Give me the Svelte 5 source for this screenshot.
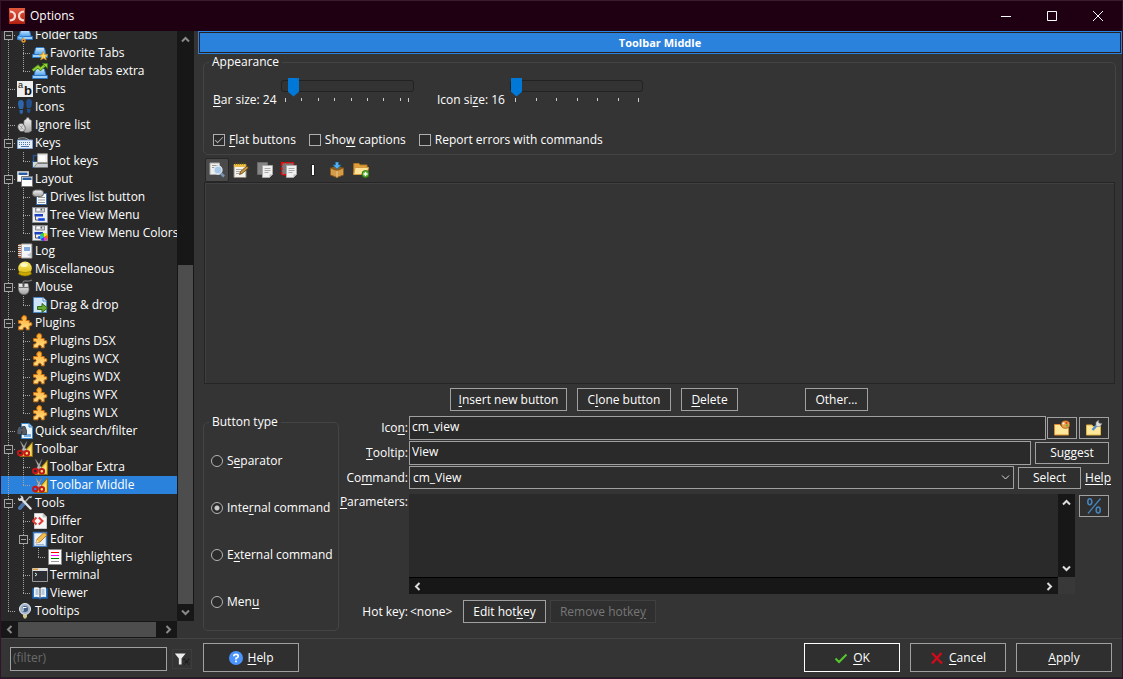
<script>
  const tree = [
    { g: 't', box: true, icon: 'tabs', label: 'Folder tabs' },
    { g: '|t', icon: 'favtabs', label: 'Favorite Tabs' },
    { g: '|l', icon: 'tabsextra', label: 'Folder tabs extra' },
    { g: 't', icon: 'fonts', label: 'Fonts' },
    { g: 't', icon: 'feet', label: 'Icons' },
    { g: 't', icon: 'ignore', label: 'Ignore list' },
    { g: 't', box: true, icon: 'keys', label: 'Keys' },
    { g: '|l', icon: 'hotkeys', label: 'Hot keys' },
    { g: 't', box: true, icon: 'layout', label: 'Layout' },
    { g: '|t', icon: 'drives', label: 'Drives list button' },
    { g: '|t', icon: 'treeview', label: 'Tree View Menu' },
    { g: '|l', icon: 'treecolors', label: 'Tree View Menu Colors' },
    { g: 't', icon: 'log', label: 'Log' },
    { g: 't', icon: 'misc', label: 'Miscellaneous' },
    { g: 't', box: true, icon: 'mouse', label: 'Mouse' },
    { g: '|l', icon: 'drag', label: 'Drag & drop' },
    { g: 't', box: true, icon: 'plugin', label: 'Plugins' },
    { g: '|t', icon: 'plugin', label: 'Plugins DSX' },
    { g: '|t', icon: 'plugin', label: 'Plugins WCX' },
    { g: '|t', icon: 'plugin', label: 'Plugins WDX' },
    { g: '|t', icon: 'plugin', label: 'Plugins WFX' },
    { g: '|l', icon: 'plugin', label: 'Plugins WLX' },
    { g: 't', icon: 'search', label: 'Quick search/filter' },
    { g: 't', box: true, icon: 'toolbar', label: 'Toolbar' },
    { g: '|t', icon: 'toolbar', label: 'Toolbar Extra' },
    { g: '|l', icon: 'toolbar', label: 'Toolbar Middle' },
    { g: 't', box: true, icon: 'tools', label: 'Tools' },
    { g: '|t', icon: 'differ', label: 'Differ' },
    { g: '|t', box: true, icon: 'editor', label: 'Editor' },
    { g: '||l', icon: 'highlight', label: 'Highlighters' },
    { g: '|t', icon: 'terminal', label: 'Terminal' },
    { g: '|l', icon: 'viewer', label: 'Viewer' },
    { g: 'l', icon: 'bulb', label: 'Tooltips' }
  ];
  const guideClass = { '|': 'pipe', t: 'tee', l: 'elbow' };
  const puzzle = '<path d="M1.500 5.500h4q-1.300-1.800-.5-3.500Q5.700.6 7.300.6T9.500 2q.7 1.700-.5 3.500h3.200v2.200q2.800-1 2.800 1.300T12.200 11v3.800H9.400q.3-2.600-1.700-2.600t-1.700 2.600H1.700v-3.500q2.500 0 2.500-1.700T1.500 8.200Z" fill="url(#orange)" stroke="#c96f12"/>';
  const scissors = '<path d="M15.500 1v14.500H3Z" fill="#e8c43a" stroke="#8d6d10"/><path d="M14 5v9H7Z" fill="#f7e27a"/><path d="M3.500 .5 9.500 9l-2 1.500Z" fill="#e6e6e6" stroke="#777" stroke-width=".6"/><path d="M9.800 .5 4.500 9.500l2 1Z" fill="#c9c9c9" stroke="#777" stroke-width=".6"/><circle cx="3.300" cy="12" r="2.300" fill="none" stroke="#c5161a" stroke-width="2"/><circle cx="9.800" cy="12.300" r="2.300" fill="none" stroke="#c5161a" stroke-width="2"/>';
  const tab = '<path d="M.5 9.500h15v3H.5Z" fill="#9fd0fa" stroke="#2c77c4"/><path d="M2 9.500 3.500 3.500q.4-1 1.500-1h6q1.100 0 1.500 1L14 9.500Z" fill="url(#blue)" stroke="#2c77c4"/>';
  const treeMenu = '<path d="M.5.5h15v15H.5Z" fill="#eceef2" stroke="#8b8f96"/><path d="M3.500 1h9v4h-9Z" fill="#cfd3d9" stroke="#8b8f96"/><path d="M5 1.500h5v2H5Z" fill="#fff"/><path d="M8.500 1.500H10v2H8.500Z" fill="#555"/><path d="M2.500 7h8.500v2.500H2.500Z" fill="#1c3fc4"/><path d="M3.500 9v4H7" fill="none" stroke="#555"/><path d="M6.500 11.500h6v2h-6Z" fill="#1c3fc4" stroke="#3a64e8"/>';
  const icons = {
    tabs: tab + '<circle cx="3.500" cy="10.500" r="2" fill="none" stroke="#4fa0ee" stroke-width="2" stroke-dasharray="1.500 .6"/><circle cx="6.500" cy="13.500" r="1.500" fill="none" stroke="#ef9a2a" stroke-width="1.500"/>',
    favtabs: tab + '<path d="m11.500 6.500 1.300 3 3 .3-2.300 2 .8 3.200-2.800-1.700L8.700 15l.8-3.200-2.300-2 3-.3Z" fill="#ffd65c" stroke="#c98a1c" stroke-width=".7"/>',
    tabsextra: '<g transform="translate(0 3)">' + tab + '</g><path d="M.8 7.500 6 3.500 8.500 6l4-3.500" fill="none" stroke="#3f7d12" stroke-width="3.400"/><path d="M.8 7.500 6 3.500 8.500 6l4-3.500" fill="none" stroke="#97cf36" stroke-width="1.800"/><path d="M10.500.5h5v5Z" fill="#97cf36" stroke="#3f7d12" stroke-width=".8"/>',
    fonts: '<path d="M0 0h16v16H0Z" fill="#eee"/><text x="1" y="7" font-size="9" font-family="Liberation Sans" fill="#111">a</text><text x="7" y="14" font-size="13" font-weight="700" font-family="Liberation Sans" fill="#111">b</text>',
    feet: '<path d="M4 1q2.800 0 2.800 4 0 2-.8 5H2.500Q1 8 1 4.500T4 1ZM2.500 11H6v1.500Q6 15 4.200 15t-1.700-4Z" fill="#2e66ab"/><path d="M12 0q-2.800 0-2.800 4 0 2 .8 5h3.500Q15 7 15 3.500T12 0Zm1.500 10H10v1.500q0 2.500 1.800 2.500t1.700-4Z" fill="#22508d"/>',
    ignore: '<path d="M7 3.500 9.500 2V.8H12V2l2.500 1.500V14l-3 1.500H8L6.500 14Z" fill="url(#gray)" stroke="#777" stroke-width=".6"/><ellipse cx="4.500" cy="10.500" rx="3.500" ry="4.300" fill="#d7d7d7" stroke="#555" stroke-width=".7" transform="rotate(-20 4.500 10.500)"/><path d="M2.500 8.500l4 4M3.500 12.500l2-4" stroke="#888" stroke-width=".7"/>',
    keys: '<path d="M.5 5h15v8.500H.5Z" fill="#e6effa" stroke="#7fa3d3"/><path d="M1 3.500Q8 1.500 12 5" fill="none" stroke="#aaa"/><path d="M2 7.500h12M2 9.500h12" stroke="#4b75ad" stroke-dasharray="1 1"/><path d="M4 11.500h8" stroke="#4b75ad"/>',
    hotkeys: '<path d="M6 2.500H1.500V12" fill="none" stroke="#29548f" stroke-width="1.500"/><path d="M.5 8.500h6v6h-6Z" fill="#d6d6cf" stroke="#29548f"/><path d="M5.500.8h10v8.700h-10Z" fill="#f2f2ee" stroke="#9b9b93"/><path d="M5 10.500h11v4H2Z" fill="#c9ccd0" stroke="#777" stroke-width=".7"/><path d="M7.500 3H13v4.500H7.500Z" fill="#fff"/>',
    layout: '<path d="M.5.5h11v10H.5Z" fill="#fff" stroke="#bbb"/><path d="M1.500 1.500h9V4h-9Z" fill="#2b5e9e"/><path d="M4.500 5.500h11v10h-11Z" fill="#fff" stroke="#777"/><path d="M5.500 6.500h9V9h-9Z" fill="#2b5e9e"/>',
    drives: '<path d="M4.500 4.500h10v11h-10Z" fill="#f8fafc" stroke="#356eb0"/><path d="M6 8.500h7m-7 2.500h7m-7 2.500h7" stroke="#999"/><rect x=".5" y="1" width="11" height="6.500" rx="3" fill="url(#gray)" stroke="#666"/>',
    treeview: treeMenu,
    treecolors: treeMenu + '<circle cx="12" cy="12" r="4" fill="#3ecf3a"/><path d="M12 12V8a4 4 0 0 1 3.500 2Z" fill="#ffe32a"/><path d="m12 12 3.500-2a4 4 0 0 1 0 4Z" fill="#ff5c1e"/><path d="m12 12 3.500 2a4 4 0 0 1-3.500 2Z" fill="#f22ec9"/><path d="M12 12v4a4 4 0 0 1-3.500-2Z" fill="#4a35f0"/><path d="m12 12-3.500 2a4 4 0 0 1 0-4Z" fill="#25b8ea"/>',
    log: '<path d="M1.500 1H5v14H1.500Z" fill="#a65a3b"/><path d="M4.500 1h10.300v14H4.500Z" fill="#f3f5f7" stroke="#aaa"/><path d="M1 2.500h3m-3 2h3m-3 2h3m-3 2h3m-3 2h3m-3 2h3" stroke="#ddd"/><path d="M7 4h6v4H7Z" fill="#7fa9dd"/><path d="m10 12 4-2.500V14Z" fill="#c2c8cf"/>',
    misc: '<circle cx="8" cy="7.300" r="6.800" fill="url(#yellow)"/><path d="M2.500 10.500q5.500 2.500 11 0l1 2.500q-6.500 4-13 0Z" fill="#c9a800" stroke="#8d7500" stroke-width=".6"/><ellipse cx="7" cy="4" rx="3.500" ry="2" fill="#fff9c2"/>',
    mouse: '<path d="M6 4Q6 1.500 9 2t6-1" fill="none" stroke="#777" stroke-width="1.300"/><path d="M1.500 4.500H11l1 6q-.5 5-5 5t-5.500-5Z" fill="url(#gray)" stroke="#777" stroke-width=".7"/><path d="M1.500 8.500h10M6.500 4.500v4" stroke="#777"/><path d="M5.500 3.500h2v4h-2Z" fill="#555"/>',
    drag: '<path d="M1.500.5H11l3.500 3.500v11.500h-13Z" fill="#cfe4f8" stroke="#4b88c8"/><path d="M11 .5V4h3.500" fill="#fff" stroke="#4b88c8"/><path d="M5.500 9.500H10v-3l5.500 4.500L10 15.500v-3H5.500Z" fill="#6bab35" stroke="#2e6a10"/>',
    plugin: puzzle,
    search: '<path d="M4.500.5H12L15.500 4v11.500h-11Z" fill="#eaf4fd" stroke="#3d87cf"/><path d="M12 .5V4h3.500" fill="#9cc8ef" stroke="#3d87cf"/><path d="M7 12.500h7" stroke="#7bb3e6" stroke-width="3"/><path d="M1.500 3.500h2.500v2h1.500v-2H8l1.500 4v4H5.500V8.500H4.500v3H0V7.500Z" fill="#555c66" stroke="#23272d" stroke-width=".7"/>',
    toolbar: scissors,
    tools: '<path d="M13 1.500 7 8" stroke="#aaa" stroke-width="1.500"/><path d="M7 8.500 3 13" stroke="#4c76aa" stroke-width="4" stroke-linecap="round"/><path d="m4.500 4 9 9.500" stroke="#e1e1e1" stroke-width="2.500" stroke-linecap="round"/><path d="m1 2.500 2 1.500 1.500-1.500L3 .5Q6.500.5 6.500 4 5 6.500 2.500 6 .5 5 1 2.500Z" fill="#ddd"/><path d="m12.500 2 2.500-1-1 2.500Z" fill="#ddd"/>',
    differ: '<path d="M2.500.5H11L14.500 4v11.500h-12Z" fill="#f7f7f7" stroke="#ccc"/><path d="M11 .5V4h3.500" fill="#bbb" stroke="#ccc"/><path d="M4.500 4.500.8 8l3.700 3.500M6.800 4.500 10.500 8l-3.700 3.500" fill="none" stroke="#e33a35" stroke-width="2"/>',
    editor: '<path d="M1.500 1.500h13v14h-13Z" fill="#e9f1fa" stroke="#3c78bd" stroke-width="1.500"/><path d="M4 13.500h8" stroke="#9db7d3"/><path d="m4 12 1.200-4L12 1.500 15 4 8 11Z" fill="#f4bd4f" stroke="#a86b16" stroke-width=".8"/><path d="m4 12 1-3.300L7.300 11Z" fill="#f6e1b6"/>',
    highlight: '<path d="M1.500.5h13v15h-13Z" fill="#fff" stroke="#888"/><path d="M4 3.500h8" stroke="red"/><path d="M4 6.500h8" stroke="#f0f"/><path d="M4 9.500h8" stroke="green"/><path d="M4 12.500h8" stroke="#999"/>',
    terminal: '<path d="M.5 1.500h15v13H.5Z" fill="#2a2d31" stroke="#999"/><path d="M.5 1h15v3H.5Z" fill="#dcdcdc"/><path d="M1 1.500h5V3H1Z" fill="#e3a53f"/><path d="m3 6 2 1.500L3 9" fill="none" stroke="#eee"/>',
    viewer: '<path d="M.5 3.500h15v10H9l-1 1-1-1H.5Z" fill="#2c6fb5" stroke="#1d5390"/><path d="M2 2.500q3.500-1 6 .7 2.500-1.700 6-.7v9.500q-3.500-.8-6 .7-2.500-1.500-6-.7Z" fill="#eef5fc"/><path d="M8 3v10" stroke="#444"/><path d="M3.500 5h3m-3 2h3m-3 2h3m3-4h3m-3 2h3m-3 2h3" stroke="#7c9cbd"/>',
    bulb: '<circle cx="8" cy="6" r="5.500" fill="#9fb3cc" stroke="#e9eef4"/><circle cx="8" cy="6" r="3" fill="#415a7d"/><path d="M6 8V4.500h3.500" stroke="#fff" fill="none"/><path d="M6 11.500h4v2L9 15.500H7L6 13.500Z" fill="#cfc68a"/>',
    view: '<path d="M1 1h9.500v11.500H1Z" fill="#f0f0ee" stroke="#aaa"/><path d="M3 3.500h6M3 5.500h4" stroke="#999"/><circle cx="9" cy="8" r="4" fill="#a8c8e8" stroke="#dfe8f1" stroke-width="1.300"/><path d="m12 11.500 3 3" stroke="#7895b6" stroke-width="2.500"/>',
    edit: '<path d="M1 2.500h12v13H1Z" fill="#f4f2ea" stroke="#8e877a"/><path d="M1 2h12v3H1Z" fill="#e9bc43"/><path d="M2 1.500h10.500" stroke="#5c4a1a" stroke-dasharray="1 1" stroke-width="2"/><path d="M3 7.500h6m-6 2h4m-4 2h3" stroke="#aaa"/><path d="m6.500 12.500 1-3L14 4l1.500 2-6.500 5.500Z" fill="#c99841" stroke="#5b3b10" stroke-width=".8"/>',
    copy: '<path d="M.5.5h10v12H.5Z" fill="#858585" stroke="#6b6b6b"/><path d="M5.500 3.500h10v9l-3 3h-7Z" fill="#f0f0f0" stroke="#aaa"/><path d="M7.500 6.500h6m-6 2h6m-6 2h4" stroke="#aaa"/><path d="M12.500 15v-2.500h3Z" fill="#bbb"/>',
    move: '<path d="M.8.8h12v12H.8Z" fill="#787878" stroke="red" stroke-width="1.600" stroke-dasharray="3 1.500"/><path d="M5.500 3.500h10v9l-3 3h-7Z" fill="#f0f0f0" stroke="#aaa"/><path d="M7.500 6.500h6m-6 2h6m-6 2h4" stroke="#aaa"/><path d="M12.500 15v-2.500h3Z" fill="#bbb"/>',
    sep: '<path d="M6.500 2.500h3v11h-3Z" fill="#111"/><path d="M7 3h2v10H7Z" fill="#fff"/>',
    pack: '<path d="m1.500 6 6.500 2.500L14.500 6v7L8 15.500 1.500 13Z" fill="#d29c4a" stroke="#8c5c1c"/><path d="M1.500 6 8 3.500 14.500 6 8 8.500Z" fill="#8a5d21"/><path d="M8 8.500v7" stroke="#f0c987"/><path d="M6.500 0h3v3H12L8 7 4 3h2.500Z" fill="#55b0ee" stroke="#1f6da8" stroke-width=".7"/>',
    newfolder: '<path d="M.8 1.500H6l1 1.500h7v9.500H.8Z" fill="#dd9f3c" stroke="#b97a1f"/><path d="M2 5.500h13.500l-1.500 7H.8Z" fill="#ffe29a" stroke="#d49a3c"/><circle cx="12.500" cy="12" r="3.500" fill="#5cb531" stroke="#2e7a12"/><path d="M10.500 12h4m-2-2v4" stroke="#fff" stroke-width="1.300"/>',
    palette: '<path d="M.5 4.500H6l1 1.500h7.500v9H.5Z" fill="#ffe79c" stroke="#dc8d2b"/><ellipse cx="11.500" cy="4.500" rx="4.300" ry="3.800" fill="#e8a14b" stroke="#985213" stroke-width=".8"/><circle cx="9.500" cy="3.500" r="1" fill="#fff"/><circle cx="12.500" cy="3" r="1" fill="#d83b22"/><circle cx="13" cy="5.500" r="1" fill="#5bad30"/>',
    wrench: '<path d="M.5 5H6l1 1.500h7.500v8.500H.5Z" fill="#ffe79c" stroke="#e0b244"/><path d="m6.500 10 5-5.500" stroke="#4e8ed3" stroke-width="2.500"/><path d="M10 5.500V2.500L12.500 0v2.500L14 3.500h2L14 6.500h-3Z" fill="#ddd" stroke="#888" stroke-width=".6"/>'
  };

  let filter = $state('');
  let selected = $state('Toolbar Middle');
  let bar = $state(5);
  let iconSize = $state(0);
  let kind = $state('internal');
  const toolbar = [
    ['view', 'View'], ['edit', 'Edit'], ['copy', 'Copy'], ['move', 'Move'],
    ['sep', 'Separator'], ['pack', 'Pack'], ['newfolder', 'New folder']
  ];
</script>

{#snippet icon(name)}
  <svg class="icon" viewBox="0 0 16 16" aria-hidden="true">{@html icons[name]}</svg>
{/snippet}

{#snippet chevron(dir)}
  <svg class="chev {dir}" viewBox="0 0 9 9" aria-hidden="true"><path d="M1 6.500 4.500 3 8 6.500" /></svg>
{/snippet}

<svg class="defs" aria-hidden="true">
  <defs>
    <linearGradient id="blue" x2="0" y2="1"><stop stop-color="#d6eeff" /><stop offset="1" stop-color="#4d9fee" /></linearGradient>
    <linearGradient id="orange" x2="0" y2="1"><stop stop-color="#ffa928" /><stop offset="1" stop-color="#ffe08a" /></linearGradient>
    <linearGradient id="gray" x2="0" y2="1"><stop stop-color="#f3f3f3" /><stop offset="1" stop-color="#a2a2a2" /></linearGradient>
    <linearGradient id="yellow" x2="0" y2="1"><stop stop-color="#fff27a" /><stop offset="1" stop-color="#d8b400" /></linearGradient>
    <linearGradient id="red" x2="0" y2="1"><stop stop-color="#e2583e" /><stop offset="1" stop-color="#b02010" /></linearGradient>
  </defs>
</svg>

<div class="window">
  <header class="titlebar">
    <svg class="logo" viewBox="0 0 16 16" aria-hidden="true">
      <path d="M0 0h16v16H0Z" fill="url(#red)" />
      <path d="M1 3.500Q6 4 6 8t-5 4.500M15 3.500Q10 4 10 8t5 4.500" fill="none" stroke="#f4dcd4" stroke-width="2.200" />
    </svg>
    <h1>Options</h1>
    <button class="sys" aria-label="Minimize"><svg viewBox="0 0 10 10"><path d="M0 5.500h10" /></svg></button>
    <button class="sys" aria-label="Maximize"><svg viewBox="0 0 10 10"><path d="M.5.5h9v9h-9Z" /></svg></button>
    <button class="sys" aria-label="Close"><svg viewBox="0 0 10 10"><path d="m0 0 10 10M10 0 0 10" /></svg></button>
  </header>

  <div class="body">
    <nav class="side">
      <div class="treearea">
        <ul class="tree">
          {#each tree as row}
            <li class:selected={row.label === selected}>
              {#each row.g.split('') as ch, i}
                <span class="guide {guideClass[ch]}">
                  {#if row.box && i === row.g.length - 1}<span class="box"></span>{/if}
                </span>
              {/each}
              {@render icon(row.icon)}
              <button class="node" onclick={() => (selected = row.label)}>{row.label}</button>
            </li>
          {/each}
        </ul>
        <div class="vbar dim">{@render chevron('up')}<div class="vtrack"><div class="vthumb"></div></div>{@render chevron('down')}</div>
      </div>
      <div class="hrow">
        <div class="hbar dim">{@render chevron('left')}<div class="htrack"><div class="hthumb"></div></div>{@render chevron('right')}</div>
      </div>
    </nav>

    <main>
      <h2>Toolbar Middle</h2>
      <fieldset class="appearance">
        <legend>Appearance</legend>
        <div class="sliders">
          <label for="bar"><u>B</u>ar size: 24</label>
          <div class="slider">
            <input id="bar" type="range" bind:value={bar} />
            <svg class="ticks" viewBox="0 0 133 8" aria-hidden="true"><path d="M4.500 2v4M20.500 2v3M37.500 2v3M53.500 2v3M70.500 2v3M86.500 2v3M102.500 2v3M119.500 2v3M127.500 2v4" /></svg>
          </div>
          <label for="isize">Icon si<u>z</u>e: 16</label>
          <div class="slider">
            <input id="isize" type="range" bind:value={iconSize} />
            <svg class="ticks" viewBox="0 0 133 8" aria-hidden="true"><path d="M5.500 2v4M26.500 2v3M46.500 2v3M67.500 2v3M87.500 2v3M108.500 2v3M128.500 2v4" /></svg>
          </div>
        </div>
        <div class="checks">
          <label><input type="checkbox" checked /><span><u>F</u>lat buttons</span></label>
          <label><input type="checkbox" /><span>Sho<u>w</u> captions</span></label>
          <label><input type="checkbox" /><span>Report errors with commands</span></label>
        </div>
      </fieldset>

      <div class="toolbar">
        {#each toolbar as [name, title], i}
          <button class:on={i === 0} aria-label={title}>{@render icon(name)}</button>
        {/each}
      </div>
      <div class="canvas"></div>

      <div class="actions">
        <button class="btn insert"><span><u>I</u>nsert new button</span></button>
        <button class="btn clone"><span>C<u>l</u>one button</span></button>
        <button class="btn delete"><span><u>D</u>elete</span></button>
        <button class="btn other">Other...</button>
      </div>

      <div class="details">
        <fieldset class="types">
          <legend>Button type</legend>
          <label><input type="radio" value="separator" bind:group={kind} /><span>S<u>e</u>parator</span></label>
          <label><input type="radio" value="internal" bind:group={kind} /><span>Inte<u>r</u>nal command</span></label>
          <label><input type="radio" value="external" bind:group={kind} /><span>E<u>x</u>ternal command</span></label>
          <label><input type="radio" value="menu" bind:group={kind} /><span>Men<u>u</u></span></label>
        </fieldset>

        <div class="form">
          <div class="field">
            <label for="icon">Ico<u>n</u>:</label>
            <input id="icon" class="text" value="cm_view" />
            <button class="btn small first" aria-label="Choose icon">{@render icon('palette')}</button>
            <button class="btn small" aria-label="Icon options">{@render icon('wrench')}</button>
          </div>
          <div class="field four">
            <label for="tooltip"><u>T</u>ooltip:</label>
            <input id="tooltip" class="text" value="View" />
            <button class="btn suggest">Suggest</button>
          </div>
          <div class="field four cmd">
            <label for="command">Co<u>m</u>mand:</label>
            <div class="combo">
              <select id="command"><option>cm_View</option></select>
              {@render chevron('down')}
            </div>
            <button class="btn select">Select</button>
            <a href="#help">Help</a>
          </div>
          <div class="field four params">
            <label for="params"><u>P</u>arameters:</label>
            <div class="memo">
              <textarea id="params"></textarea>
              <div class="vbar">{@render chevron('up')}<div class="vtrack"></div>{@render chevron('down')}</div>
              <div class="hbar">{@render chevron('left')}<div class="htrack"></div>{@render chevron('right')}</div>
            </div>
            <button class="btn small percent" aria-label="Insert variable">
              <svg viewBox="0 0 16 18" aria-hidden="true"><path d="M2 16.500 14.500 1.500" stroke-width="1.300" /><ellipse cx="3.800" cy="4.800" rx="2" ry="3" /><ellipse cx="12.200" cy="13" rx="2" ry="3" /></svg>
            </button>
          </div>
          <div class="hotkey">
            <span class="cap">Hot key:</span>
            <span class="none">&lt;none&gt;</span>
            <button class="btn edit"><span>Edit hot<u>k</u>ey</span></button>
            <button class="btn remove" disabled><span>Remove hotke<u>y</u></span></button>
          </div>
        </div>
      </div>
    </main>
  </div>

  <footer>
    <div class="filter">
      <input class="text" placeholder="(filter)" aria-label="Filter" bind:value={filter} />
      <button aria-label="Clear filter">
        <svg viewBox="0 0 20 20" aria-hidden="true"><path d="M2 4h12L9.500 9.500V16h-3V9.500Z" fill="#eee" /><path d="m12 10 6 6m0-6-6 6" stroke="#1c1c1c" stroke-width="2" stroke-dasharray="1.500 1" /></svg>
      </button>
    </div>
    <div class="buttons">
      <button class="btn big">
        <svg viewBox="0 0 14 14" aria-hidden="true"><circle cx="7" cy="7" r="7" fill="#4a94ff" /><path d="M4.800 5.300Q4.800 3.300 7 3.300t2.200 1.900Q9.200 6.500 7 7.300v1.200M7 9.500v1.700" fill="none" stroke="#fff" stroke-width="1.700" /></svg>
        <span><u>H</u>elp</span>
      </button>
      <span class="spring"></span>
      <button class="btn big ok">
        <svg viewBox="0 0 14 14" aria-hidden="true"><path d="m1.500 7.500 3.500 3.500 7.500-7.500" fill="none" stroke="#55c92c" stroke-width="2" /></svg>
        <span><u>O</u>K</span>
      </button>
      <button class="btn big">
        <svg viewBox="0 0 14 14" aria-hidden="true"><path d="m2 2 10 10.500M11.500 2 2 12.500" fill="none" stroke="#d60a18" stroke-width="2.200" /></svg>
        <span><u>C</u>ancel</span>
      </button>
      <button class="btn big"><span><u>A</u>pply</span></button>
    </div>
  </footer>
</div>

<style>
  :global(body) { margin: 0; background: #343434; }
  .window, .window *, .window *::before { box-sizing: border-box; }
  .window {
    min-height: 100vh;
    display: flex;
    flex-direction: column;
    background: #343434;
    color: #fff;
    font: 12px/16px "Open Sans", "Noto Sans", sans-serif;
    border: 1px solid #30142a;
    border-top-color: #3a1c30;
  }
  .defs { position: absolute; width: 0; height: 0; }
  button, input, select, textarea { font: inherit; color: inherit; margin: 0; border-radius: 0; }
  button { padding: 0; border: 0; background: none; }
  u { text-decoration: underline; text-underline-offset: 2px; }
  h1, h2 { margin: 0; font-size: inherit; font-weight: 400; }
  .icon { width: 16px; height: 16px; flex: none; display: block; }

  .titlebar { height: 30px; background: #1f0012; display: flex; align-items: center; padding: 0 1px 0 8px; flex: none; }
  .logo { width: 16px; height: 16px; margin-right: 5px; }
  .titlebar h1 { flex: 1; }
  .sys { width: 46px; height: 30px; display: grid; place-items: center; }
  .sys svg { width: 10px; height: 10px; fill: none; stroke: #fff; }

  .body { flex: 1; display: grid; grid-template-columns: 193px 1fr; }
  .side { display: flex; flex-direction: column; background: #292929; }
  .treearea { flex: 1; display: flex; }
  .tree { flex: 1; min-width: 0; list-style: none; margin: 0; padding: 0; overflow: hidden; }
  .tree li { height: 18px; display: flex; align-items: center; padding-left: 1px; white-space: nowrap; }
  .tree li:first-child { margin-top: -5px; }
  .tree li.selected { background: #2b82dc; }
  .node { margin-left: 2px; line-height: 18px; }
  .guide { width: 15px; height: 18px; flex: none; position: relative; background-repeat: no-repeat; --v: repeating-linear-gradient(to bottom, #a4a4a4 0 1px, transparent 1px 2px); --h: repeating-linear-gradient(to right, #a4a4a4 0 1px, transparent 1px 2px); }
  .pipe { background-image: var(--v); background-size: 1px 18px; background-position: 6px 0; }
  .tee { background-image: var(--v), var(--h); background-size: 1px 18px, 8px 1px; background-position: 6px 0, 6px 9px; }
  .elbow { background-image: var(--v), var(--h); background-size: 1px 10px, 8px 1px; background-position: 6px 0, 6px 9px; }
  .box { position: absolute; left: 2px; top: 5px; width: 9px; height: 9px; border: 1px solid #a4a4a4; background: linear-gradient(#a4a4a4, #a4a4a4) center / 5px 1px no-repeat #292929; }

  .chev { width: 9px; height: 9px; flex: none; fill: none; stroke: #ddd; stroke-width: 2; }
  .dim .chev { stroke: #8a8a8a; }
  .chev.down { transform: rotate(180deg); }
  .chev.left { transform: rotate(-90deg); }
  .chev.right { transform: rotate(90deg); }
  .vbar { width: 17px; flex: none; background: #171717; display: flex; flex-direction: column; align-items: center; padding: 4px 0; gap: 4px; }
  .vtrack { flex: 1; width: 15px; display: flex; flex-direction: column; justify-content: flex-end; }
  .vthumb { height: 61%; background: #4d4d4d; }
  .hbar { height: 17px; background: #171717; display: flex; align-items: center; padding: 0 4px; gap: 4px; }
  .htrack { flex: 1; height: 15px; }
  .hthumb { width: 97%; height: 15px; background: #4d4d4d; }
  .hrow { display: flex; padding-right: 17px; background: #343434; }
  .hrow .hbar { flex: 1; }

  main { display: flex; flex-direction: column; padding-left: 4px; min-width: 0; }
  h2 { height: 23px; line-height: 17px; border: 1px solid #2b82dc; outline: 1px solid #29211f; outline-offset: -2px; background: #2b82dc; text-align: center; padding-top: 2px; font-weight: 700; font-size: 11px; }
  fieldset { min-width: 0; margin: 0; border: 1px solid #444; border-radius: 5px; padding: 0; }
  legend { margin-left: -4px; padding: 0 3px; height: 16px; }
  .appearance { margin: 0 6px 0 5px; height: 101px; padding: 0 9px; }
  .sliders { display: flex; align-items: flex-start; height: 62px; padding-top: 6px; }
  .sliders label { padding-top: 16px; width: 68px; white-space: nowrap; }
  .sliders label + .slider + label { margin-left: 23px; width: 73px; }
  .slider { width: 133px; }
  .slider input { appearance: none; display: block; width: 133px; height: 19px; background: none; }
  .slider input::-webkit-slider-runnable-track { height: 12px; border: 1px solid #222; border-radius: 3px; background: #333; }
  .slider input::-webkit-slider-thumb { appearance: none; width: 11px; height: 19px; margin-top: -3px; background: #0078d7; clip-path: polygon(0 0, 100% 0, 100% 75%, 50% 100%, 0 75%); }
  .ticks { display: block; width: 133px; height: 8px; margin-top: 1px; stroke: #ccc; }
  .checks { display: flex; gap: 13px; }
  .checks label, .types label { display: flex; align-items: center; gap: 4px; white-space: nowrap; }
  input[type="checkbox"] { appearance: none; width: 12px; height: 12px; border: 1px solid #aeaeae; background: #2b2b2b; }
  input[type="checkbox"]:checked::before { content: ""; display: block; width: 8px; height: 4px; margin: 2px 0 0 1px; border: solid #aaa; border-width: 0 0 1px 1px; transform: rotate(-45deg); }

  .toolbar { display: flex; padding: 3px 0 0 7px; }
  .toolbar button { width: 24px; height: 24px; display: grid; place-items: center; }
  .toolbar .on { background: #4a4a4a; border: 1px solid #262626; border-radius: 2px; }
  .canvas { flex: 1; min-height: 120px; margin: 0 7px 0 6px; border: 1px solid #252525; box-shadow: inset 1px 1px #404040; }

  .btn { height: 23px; border: 1px solid #a0a0a0; background: #2f2f2f; display: flex; align-items: center; justify-content: center; flex: none; white-space: nowrap; }
  .actions { display: flex; justify-content: center; gap: 10px; padding: 4px 2px 4px 0; }
  .insert { width: 117px; }
  .clone { width: 94px; }
  .delete { width: 57px; }
  .other { width: 63px; margin-left: 57px; }

  .details { display: flex; margin: 0 0 7px 5px; }
  .types { width: 136px; height: 217px; margin-top: -1px; padding-left: 7px; display: flex; flex-direction: column; }
  .types legend { margin-left: -2px; }
  .types label { height: 47px; padding-top: 15px; }
  input[type="radio"] { appearance: none; width: 12px; height: 12px; border: 1px solid #b4b4b4; border-radius: 50%; background: #2b2b2b; }
  input[type="radio"]:checked { background: radial-gradient(#ccc 0 2px, #2b2b2b 3px); }
  .form { flex: 1; min-width: 0; padding-right: 13px; }
  .field { display: flex; align-items: center; height: 25px; }
  .field > label, .cap { width: 69px; margin-right: 1px; text-align: right; flex: none; }
  .text { height: 24px; border: 1px solid #a0a0a0; background: #2a2a2a; padding: 0 2px 2px; min-width: 0; outline: 0; }
  .field .text { flex: 1; }
  .small { width: 30px; height: 22px; margin-left: 2px; }
  .small.first { margin-left: 1px; }
  .four .btn { margin-left: 4px; height: 22px; }
  .suggest { width: 74px; }
  .select { width: 63px; }
  .cmd { margin-right: -2px; }
  .field a { color: #fff; margin-left: 4px; text-underline-offset: 2px; }
  .combo { flex: 1; min-width: 0; display: grid; align-items: center; }
  .combo select { grid-area: 1 / 1; appearance: none; width: 100%; height: 23px; border: 1px solid #a0a0a0; background: #2d2d2d; padding: 0 3px; outline: 0; }
  .combo .chev { grid-area: 1 / 1; justify-self: end; margin-right: 4px; pointer-events: none; stroke-width: 1; }
  .params { height: auto; align-items: flex-start; padding-top: 4px; }
  .memo { flex: 1; display: grid; grid-template: 83px 17px / 1fr 17px; min-width: 0; background: #383838; }
  textarea { border: 0; background: #2a2a2a; resize: none; outline: 0; width: 100%; height: 100%; display: block; }
  .memo .hbar { border-top: 1px solid #000; }
  .percent { margin-top: 1px; }
  .percent svg { width: 16px; height: 18px; fill: none; stroke: #4584bd; stroke-width: 1.600; }
  .hotkey { display: flex; align-items: center; padding-top: 6px; }
  .none { width: 54px; padding-left: 1px; white-space: nowrap; }
  .edit { width: 83px; margin-right: 4px; }
  .remove { width: 106px; border-color: #404040; color: #777; }

  footer { display: grid; grid-template-columns: 193px 1fr; height: 40px; border-top: 1px solid #444; box-shadow: inset 0 -1px #222; flex: none; }
  .filter { display: flex; align-items: center; padding-left: 9px; gap: 5px; }
  .filter .text { width: 157px; }
  .filter ::placeholder { color: #6a6a6a; }
  .filter button { width: 20px; height: 20px; border: 1px solid #3d3d3d; }
  .filter svg { width: 18px; height: 18px; display: block; }
  .buttons { display: flex; gap: 10px; padding: 4px 10px 0 9px; }
  .spring { flex: 1; }
  .big { width: 96px; height: 29px; gap: 5px; }
  .big svg { width: 14px; height: 14px; }
  .ok { border-color: #fff; }
</style>
